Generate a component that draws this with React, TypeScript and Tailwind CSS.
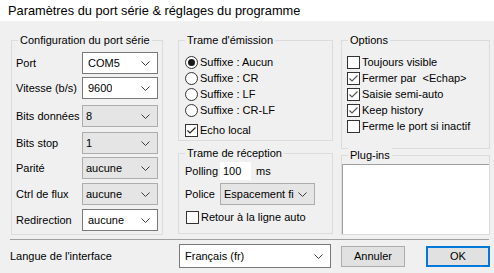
import React from "react";

const Chevron = () => (
  <svg width="9" height="5" viewBox="0 0 9 5" className="shrink-0">
    <path d="M0.5 0.5 L4.5 4.5 L8.5 0.5" fill="none" stroke="#3c3c3c" strokeWidth="1" />
  </svg>
);

function Combo({ value, editable, className }: { value: string; editable?: boolean; className: string }) {
  return (
    <div
      className={`flex items-center justify-between pr-[7px] border overflow-hidden ${
        editable ? "bg-white border-[#7a7a7a] pl-[5px]" : "bg-[#e5e5e5] border-[#adadad] pl-[3px]"
      } ${className}`}
    >
      <span className="whitespace-nowrap overflow-hidden">{value}</span>
      <Chevron />
    </div>
  );
}

function Group({ title, className, children }: { title: string; className: string; children?: React.ReactNode }) {
  return (
    <div className={`relative border border-[#dcdcdc] ${className}`}>
      <span className="absolute -top-[8px] left-[6px] px-[2px] bg-[#f0f0f0] leading-[14px]">{title}</span>
      {children}
    </div>
  );
}

function Check({ checked, light }: { checked?: boolean; light?: boolean }) {
  return (
    <span className="w-[13px] h-[13px] border border-[#333] bg-white shrink-0 flex items-center justify-center">
      {checked && (
        <svg width="11" height="11" viewBox="0 0 11 11">
          <path d="M1.5 5.5 L4 8 L9.5 2.5" fill="none" stroke={light ? "#555" : "#222"} strokeWidth="1.2" />
        </svg>
      )}
    </span>
  );
}

function Radio({ checked }: { checked?: boolean }) {
  return (
    <span className="w-[13px] h-[13px] rounded-full border border-[#333] bg-white shrink-0 flex items-center justify-center">
      {checked && <span className="w-[7px] h-[7px] rounded-full bg-[#1a1a1a]" />}
    </span>
  );
}

const portRows = [
  { label: "Port", value: "COM5", editable: true, mt: "mt-0" },
  { label: "Vitesse (b/s)", value: "9600", editable: true, mt: "mt-[3px]" },
  { label: "Bits données", value: "8", editable: false, mt: "mt-[6px]" },
  { label: "Bits stop", value: "1", editable: false, mt: "mt-[5px]" },
  { label: "Parité", value: "aucune", editable: false, mt: "mt-[3px]" },
  { label: "Ctrl de flux", value: "aucune", editable: false, mt: "mt-[4px]" },
  { label: "Redirection", value: "aucune", editable: true, mt: "mt-[4px]" },
];

const options = [
  { label: "Toujours visible", checked: false },
  { label: "Fermer par  <Echap>", checked: true },
  { label: "Saisie semi-auto", checked: true },
  { label: "Keep history", checked: true },
  { label: "Ferme le port si inactif", checked: false },
];

export default function App() {
  return (
    <div className="w-[494px] h-[273px] bg-[#f0f0f0] text-black text-[11px] font-['Liberation_Sans',Arial,sans-serif] overflow-hidden">
      <div className="h-[21px] bg-white pl-[8px] flex items-center text-[12.8px]">
        Paramètres du port série &amp; réglages du programme
      </div>

      <div className="flex pt-[19px] pl-[11px]">
        <Group title="Configuration du port série" className="w-[152px] h-[195px] pt-[11px] pl-[4px]">
          {portRows.map((r) => (
            <div key={r.label} className={`flex items-center h-[22px] ${r.mt}`}>
              <span className="w-[66px] whitespace-nowrap">{r.label}</span>
              <Combo value={r.value} editable={r.editable} className="w-[76px] h-[22px]" />
            </div>
          ))}
        </Group>

        <div className="ml-[15px] w-[155px] flex flex-col">
          <Group title="Trame d'émission" className="h-[101px] pt-[13px] pl-[6px]">
            {["Suffixe : Aucun", "Suffixe : CR", "Suffixe : LF", "Suffixe : CR-LF"].map((s, i) => (
              <div key={s} className="flex items-center h-[16px] gap-[2px]">
                <Radio checked={i === 0} />
                <span>{s}</span>
              </div>
            ))}
            <div className="flex items-center h-[16px] gap-[2px] mt-[4px]">
              <Check checked />
              <span>Echo local</span>
            </div>
          </Group>

          <Group title="Trame de réception" className="mt-[12px] h-[81px] pt-[8px] pl-[6px]">
            <div className="flex items-center h-[18px]">
              <span className="w-[35px]">Polling</span>
              <div className="w-[31px] h-[18px] bg-white pl-[3px] flex items-center">100</div>
              <span className="ml-[5px]">ms</span>
            </div>
            <div className="flex items-center h-[22px] mt-[3px]">
              <span className="w-[35px]">Police</span>
              <Combo value="Espacement fi" className="w-[95px] h-[22px]" />
            </div>
            <div className="flex items-center h-[16px] gap-[2px] mt-[4px] pl-[1px]">
              <Check />
              <span>Retour à la ligne auto</span>
            </div>
          </Group>
        </div>

        <div className="ml-[8px] w-[149px] flex flex-col">
          <Group title="Options" className="h-[109px] pt-[13px] pl-[5px]">
            {options.map((o) => (
              <div key={o.label} className="flex items-center h-[16px] gap-[2px]">
                <Check checked={o.checked} light />
                <span className="whitespace-pre">{o.label}</span>
              </div>
            ))}
          </Group>
          <Group title="Plug-ins" className="mt-[6px] h-[80px] pt-[8px] flex flex-col">
            <div className="flex-1 bg-white border-t border-l border-[#a0a0a0]" />
          </Group>
        </div>
      </div>

      <div className="ml-[10px] mr-[5px] mt-[4px] border-t border-[#a0a0a0]" />

      <div className="flex items-center h-[32px] pl-[10px]">
        <span className="w-[169px]">Langue de l'interface</span>
        <Combo value="Français (fr)" editable className="w-[152px] h-[24px]" />
        <button className="ml-[10px] w-[64px] h-[21px] bg-[#e1e1e1] border border-[#adadad]">Annuler</button>
        <button className="ml-[21px] w-[64px] h-[21px] bg-[#e1e1e1] border-2 border-[#0078d7]">OK</button>
      </div>
    </div>
  );
}
